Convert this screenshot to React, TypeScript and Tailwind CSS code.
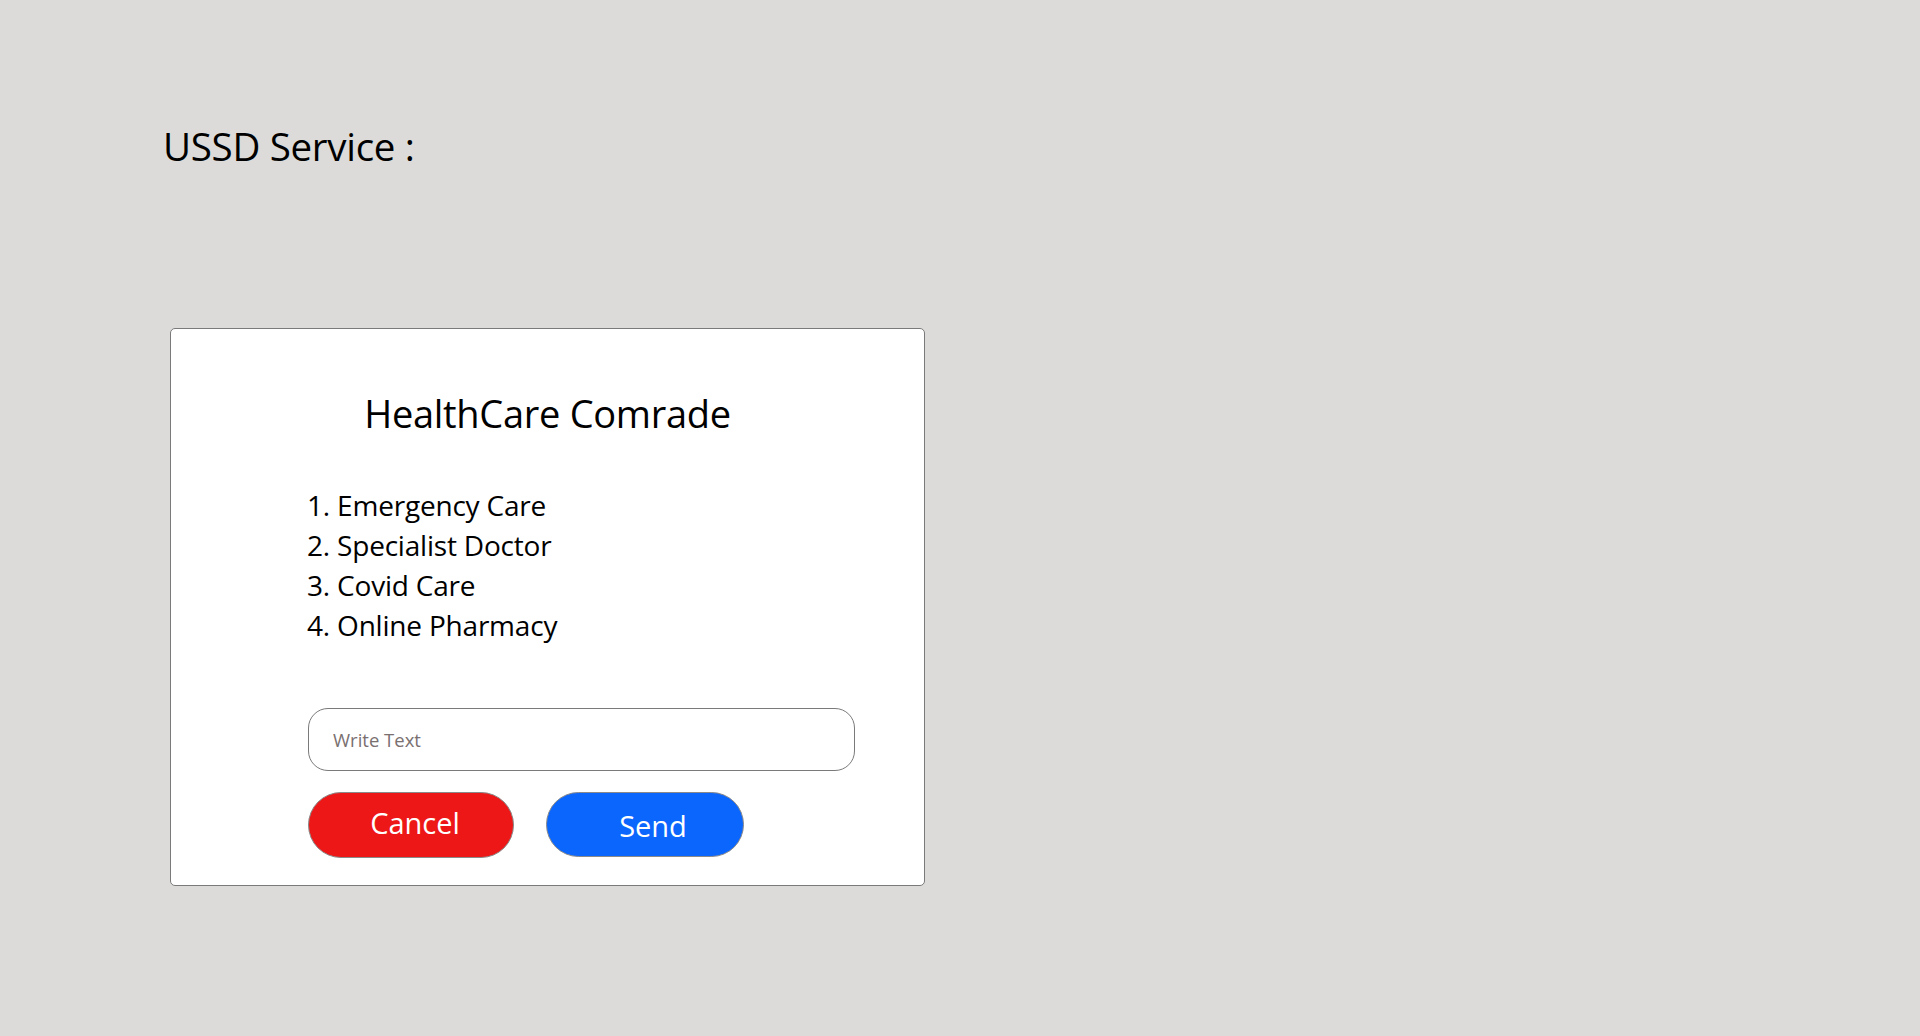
import React from 'react';

const OPTIONS = ['Emergency Care', 'Specialist Doctor', 'Covid Care', 'Online Pharmacy'];

export default function App() {
  return (
    <div className="min-h-screen w-full bg-[#dcdbd9] font-['Open_Sans',sans-serif] text-black">
      <div className="pl-[163px] pt-[120px]">
        {/* Page title */}
        <h1 className="text-[38.5px] leading-[52px] tracking-[-0.3px]">USSD Service :</h1>

        {/* USSD dialog */}
        <div className="mt-[156px] ml-[7px] w-[755px] h-[558px] bg-white border border-[#7a7a7a] rounded-[5px] flex flex-col">
          <h2 className="mt-[58px] text-center text-[38px] leading-[52px] tracking-[-0.3px]">HealthCare Comrade</h2>

          <ol className="mt-[46px] ml-[136px] text-[28px] leading-[40px] tracking-[-0.2px]">
            {OPTIONS.map((opt, i) => (
              <li key={opt}>{i + 1}. {opt}</li>
            ))}
          </ol>

          <div className="ml-[137px] mt-[63px] w-[547px]">
            <input
              type="text"
              placeholder="Write Text"
              className="w-full h-[63px] rounded-[20px] border border-[#7a7a7a] px-[24px] text-[18.5px] placeholder:text-[#7a7070] outline-none"
            />
            <div className="mt-[21px] flex items-start gap-[32px]">
              <button className="w-[206px] h-[66px] rounded-full bg-[#ee1717] border border-[#8a8a8a] text-white text-[29px] leading-none pb-[6px] pl-[8px]">
                Cancel
              </button>
              <button className="w-[198px] h-[65px] rounded-full bg-[#0b66fe] border border-[#8a8a8a] text-white text-[29px] leading-none pt-[2px] pl-[16px]">
                Send
              </button>
            </div>
          </div>
        </div>
      </div>
    </div>
  );
}
